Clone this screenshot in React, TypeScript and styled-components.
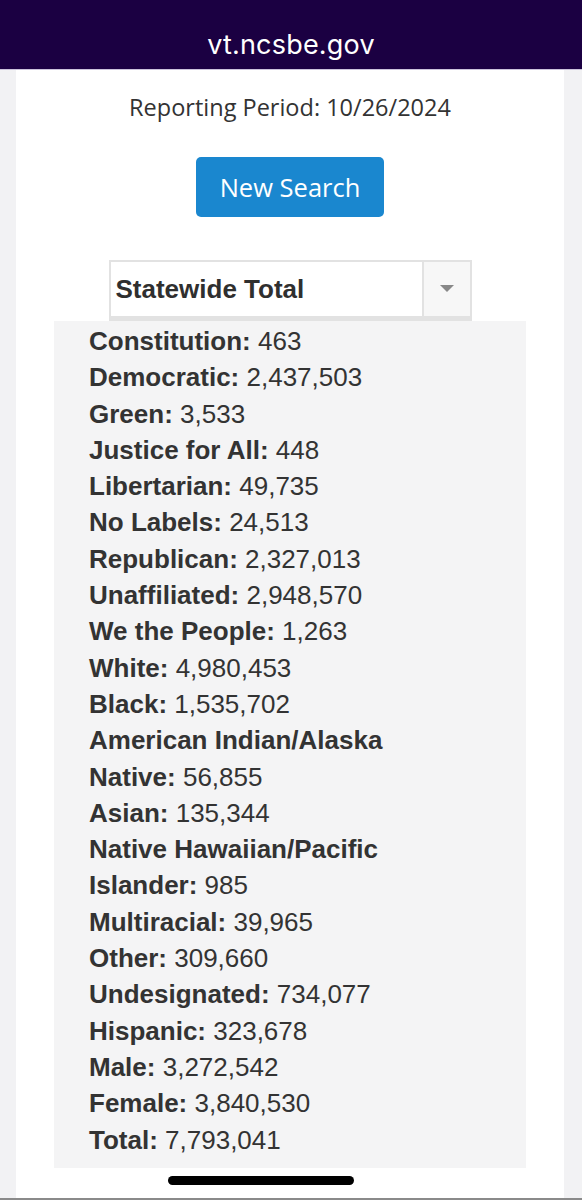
import React from "react";
import styled, { createGlobalStyle } from "styled-components";

const GlobalStyle = createGlobalStyle`
  html, body {
    margin: 0;
    padding: 0;
    background: #f2f2f4;
  }
  * {
    box-sizing: border-box;
  }
`;

const Page = styled.div`
  min-height: 1200px;
  display: flex;
  flex-direction: column;
`;

const AddressBar = styled.header`
  height: 70px;
  background: #1b0042;
  border-bottom: 1px solid #cbc2db;
  display: flex;
  align-items: center;
  justify-content: center;
  padding-top: 20px;
`;

const Domain = styled.span`
  color: #fff;
  font-family: Inter, "Liberation Sans", sans-serif;
  font-size: 27px;
  letter-spacing: 0.2px;
`;

const Card = styled.main`
  flex: 1;
  margin: 0 18px 0 16px;
  background: #fff;
  display: flex;
  flex-direction: column;
  align-items: center;
  padding: 22px 0 30px 0;
`;

const Period = styled.p`
  margin: 0;
  font-family: "Open Sans", sans-serif;
  font-size: 23.5px;
  line-height: 31px;
  color: #333;
`;

const Button = styled.button`
  margin-top: 34px;
  width: 188px;
  height: 60px;
  border: none;
  border-radius: 5px;
  background: #1a87cf;
  color: #fff;
  font-family: "Open Sans", sans-serif;
  font-size: 25.5px;
  cursor: pointer;
`;

const Select = styled.div`
  margin-top: 43px;
  width: 363px;
  height: 61px;
  display: flex;
  border: 2px solid #e2e2e2;
  border-bottom-width: 5px;
  background: #fff;
`;

const SelectValue = styled.div`
  flex: 1;
  display: flex;
  align-items: center;
  padding-left: 5px;
  font-family: "Liberation Sans", Arial, sans-serif;
  font-weight: 700;
  font-size: 26px;
  color: #2f2f2f;
`;

const SelectArrow = styled.div`
  width: 48px;
  display: flex;
  align-items: center;
  justify-content: center;
  background: #f7f7f7;
  border-left: 2px solid #e2e2e2;
`;

const Panel = styled.ul`
  list-style: none;
  margin: 0;
  width: 472px;
  background: #f4f4f5;
  padding: 2px 0 10px 35px;
`;

const Row = styled.li`
  font-family: "Liberation Sans", Arial, sans-serif;
  font-size: 26px;
  line-height: 36.3px;
  color: #333;
  white-space: nowrap;
`;

const Label = styled.b`
  font-weight: 700;
  color: #333;
`;

const HomeIndicator = styled.div`
  position: fixed;
  left: 168px;
  top: 1176px;
  width: 186px;
  height: 9px;
  border-radius: 5px;
  background: #000;
`;

const BottomEdge = styled.div`
  position: fixed;
  left: 0;
  right: 0;
  top: 1198px;
  height: 2px;
  background: #8a8a8a;
`;

type Item = { label: string; value?: string };

const items: Item[] = [
  { label: "Constitution:", value: "463" },
  { label: "Democratic:", value: "2,437,503" },
  { label: "Green:", value: "3,533" },
  { label: "Justice for All:", value: "448" },
  { label: "Libertarian:", value: "49,735" },
  { label: "No Labels:", value: "24,513" },
  { label: "Republican:", value: "2,327,013" },
  { label: "Unaffiliated:", value: "2,948,570" },
  { label: "We the People:", value: "1,263" },
  { label: "White:", value: "4,980,453" },
  { label: "Black:", value: "1,535,702" },
  { label: "American Indian/Alaska" },
  { label: "Native:", value: "56,855" },
  { label: "Asian:", value: "135,344" },
  { label: "Native Hawaiian/Pacific" },
  { label: "Islander:", value: "985" },
  { label: "Multiracial:", value: "39,965" },
  { label: "Other:", value: "309,660" },
  { label: "Undesignated:", value: "734,077" },
  { label: "Hispanic:", value: "323,678" },
  { label: "Male:", value: "3,272,542" },
  { label: "Female:", value: "3,840,530" },
  { label: "Total:", value: "7,793,041" },
];

export default function App() {
  return (
    <Page>
      <GlobalStyle />
      <AddressBar>
        <Domain>vt.ncsbe.gov</Domain>
      </AddressBar>
      <Card>
        <Period>Reporting Period: 10/26/2024</Period>
        <Button>New Search</Button>
        <Select>
          <SelectValue>Statewide Total</SelectValue>
          <SelectArrow>
            <svg width="14" height="8" viewBox="0 0 14 8">
              <path d="M0 0 L14 0 L7 7 Z" fill="#888" />
            </svg>
          </SelectArrow>
        </Select>
        <Panel>
          {items.map((item) => (
            <Row key={item.label}>
              <Label>{item.label}</Label>
              {item.value && ` ${item.value}`}
            </Row>
          ))}
        </Panel>
      </Card>
      <HomeIndicator />
      <BottomEdge />
    </Page>
  );
}
